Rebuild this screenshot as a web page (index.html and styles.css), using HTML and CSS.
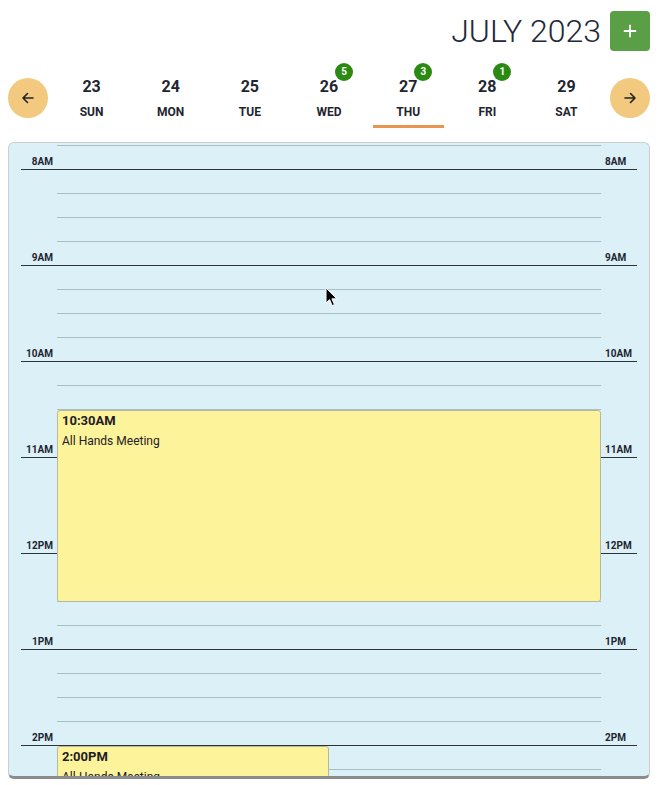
FILE: index.html
```html
<!DOCTYPE html>
<html>
<head>
<meta charset="utf-8">
<link rel="stylesheet" href="styles.css">
</head>
<body>
<div class="app">
  <header class="header">
    <h1 class="title">JULY 2023</h1>
    <button class="add-btn" aria-label="Add">
      <svg width="14" height="14" viewBox="0 0 14 14"><path d="M7 1.5v11M1.5 7h11" stroke="#fff" stroke-width="1.8" stroke-linecap="round" fill="none"/></svg>
    </button>
  </header>

  <nav class="days">
    <button class="nav-btn" aria-label="Previous">
      <svg width="14" height="14" viewBox="0 0 14 14"><path d="M12 7H2M6.5 2.5L2 7l4.5 4.5" stroke="#222" stroke-width="1.6" stroke-linecap="round" stroke-linejoin="round" fill="none"/></svg>
    </button>
    <div class="day"><span class="num">23</span><span class="wd">SUN</span><span class="bar"></span></div>
    <div class="day"><span class="num">24</span><span class="wd">MON</span><span class="bar"></span></div>
    <div class="day"><span class="num">25</span><span class="wd">TUE</span><span class="bar"></span></div>
    <div class="day"><span class="num">26<span class="badge">5</span></span><span class="wd">WED</span><span class="bar"></span></div>
    <div class="day active"><span class="num">27<span class="badge">3</span></span><span class="wd">THU</span><span class="bar"></span></div>
    <div class="day"><span class="num">28<span class="badge">1</span></span><span class="wd">FRI</span><span class="bar"></span></div>
    <div class="day"><span class="num">29</span><span class="wd">SAT</span><span class="bar"></span></div>
    <button class="nav-btn" aria-label="Next">
      <svg width="14" height="14" viewBox="0 0 14 14"><path d="M2 7h10M7.5 2.5L12 7l-4.5 4.5" stroke="#222" stroke-width="1.6" stroke-linecap="round" stroke-linejoin="round" fill="none"/></svg>
    </button>
  </nav>

  <section class="panel">
    <div class="track">
      <div class="q"></div>
      <div class="h"><span class="lbl l">8AM</span><span class="lbl r">8AM</span></div>
      <div class="q"></div><div class="q"></div><div class="q"></div>
      <div class="h"><span class="lbl l">9AM</span><span class="lbl r">9AM</span></div>
      <div class="q"></div><div class="q"></div><div class="q"></div>
      <div class="h"><span class="lbl l">10AM</span><span class="lbl r">10AM</span></div>
      <div class="q"></div><div class="q"></div><div class="q"></div>
      <div class="h"><span class="lbl l">11AM</span><span class="lbl r">11AM</span></div>
      <div class="q"></div><div class="q"></div><div class="q"></div>
      <div class="h"><span class="lbl l">12PM</span><span class="lbl r">12PM</span></div>
      <div class="q"></div><div class="q"></div><div class="q"></div>
      <div class="h"><span class="lbl l">1PM</span><span class="lbl r">1PM</span></div>
      <div class="q"></div><div class="q"></div><div class="q"></div>
      <div class="h"><span class="lbl l">2PM</span><span class="lbl r">2PM</span></div>
      <div class="q"></div><div class="q"></div><div class="q"></div>

      <div class="event ev1">
        <div class="ev-time">10:30AM</div>
        <div class="ev-title">All Hands Meeting</div>
      </div>
      <div class="event ev2">
        <div class="ev-time">2:00PM</div>
        <div class="ev-title">All-Hands Meeting</div>
      </div>
    </div>
    <svg class="cursor" width="13" height="20" viewBox="0 0 13 20"><path d="M1 1v15l3.6-3.4 2.6 6 2.3-1-2.6-5.8h5z" fill="#000" stroke="#fff" stroke-width="1"/></svg>
  </section>
</div>
</body>
</html>
```

FILE: styles.css
```css
* { box-sizing: border-box; }
html, body { margin: 0; padding: 0; background: #fff; }
body { font-family: Roboto, "Liberation Sans", Arial, sans-serif; color: #1f2530; overflow: hidden; }

.app { width: 642px; margin-left: 8px; padding-top: 11px; }

.header { display: flex; justify-content: flex-end; align-items: center; gap: 9px; height: 40px; }
.title { margin: 0; font-weight: 300; font-size: 32px; letter-spacing: 0; color: #222836; line-height: 40px; }
.add-btn { width: 40px; height: 40px; border: 0; border-radius: 4px; background: #5a9e46; display: flex; align-items: center; justify-content: center; padding: 0; }

.days { display: flex; align-items: flex-start; margin-top: 26px; }
.nav-btn { width: 40px; height: 40px; flex: none; border: 0; border-radius: 50%; background: #f2c97f; display: flex; align-items: center; justify-content: center; padding: 0; margin-top: 1px; }
.days .nav-btn:first-child { margin-right: 4px; }
.days .nav-btn:last-child { margin-left: 4px; }
.day { flex: 1; display: flex; flex-direction: column; align-items: center; }
.num { position: relative; font-weight: 700; font-size: 16px; line-height: 19px; }
.wd { font-weight: 700; font-size: 12px; line-height: 14px; margin-top: 9px; }
.bar { width: calc(100% - 8px); height: 3px; margin-top: 6px; background: transparent; }
.active .bar { background: #e8964f; }
.badge { position: absolute; left: calc(100% - 3px); top: -14px; width: 18px; height: 18px; border-radius: 50%; background: #2b8a12; color: #fff; font-size: 10px; font-weight: 700; line-height: 18px; text-align: center; }

.panel { position: relative; margin-top: 14px; height: 637px; background: #dcf0f7; border: 1px solid #c9cfd2; border-bottom: 3px solid #8b8b8b; border-radius: 6px; overflow: hidden; }
.track { position: relative; margin-top: -21px; }
.q { height: 24px; margin: 0 48px; border-bottom: 1px solid #a9bdc5; }
.h { height: 24px; margin: 0 12px; border-bottom: 1px solid #2e3338; display: flex; justify-content: space-between; align-items: flex-end; }
.lbl { width: 36px; font-size: 10px; font-weight: 700; line-height: 12px; padding-bottom: 1px; color: #1f2530; }
.lbl.l { text-align: right; padding-right: 4px; }
.lbl.r { text-align: left; padding-left: 4px; }

.event { position: absolute; left: 48px; background: #fdf39a; border: 1px solid #b9b7a2; border-radius: 3px; padding: 2px 4px; overflow: hidden; z-index: 2; }
.ev1 { top: 288px; width: 544px; height: 192px; }
.ev2 { top: 624px; width: 272px; height: 120px; }
.ev-time { font-size: 13px; font-weight: 700; line-height: 16px; color: #1d2026; }
.ev-title { font-size: 12px; line-height: 16px; margin-top: 4px; color: #1d2026; }

.cursor { position: absolute; left: 316px; top: 144px; z-index: 3; }
```
